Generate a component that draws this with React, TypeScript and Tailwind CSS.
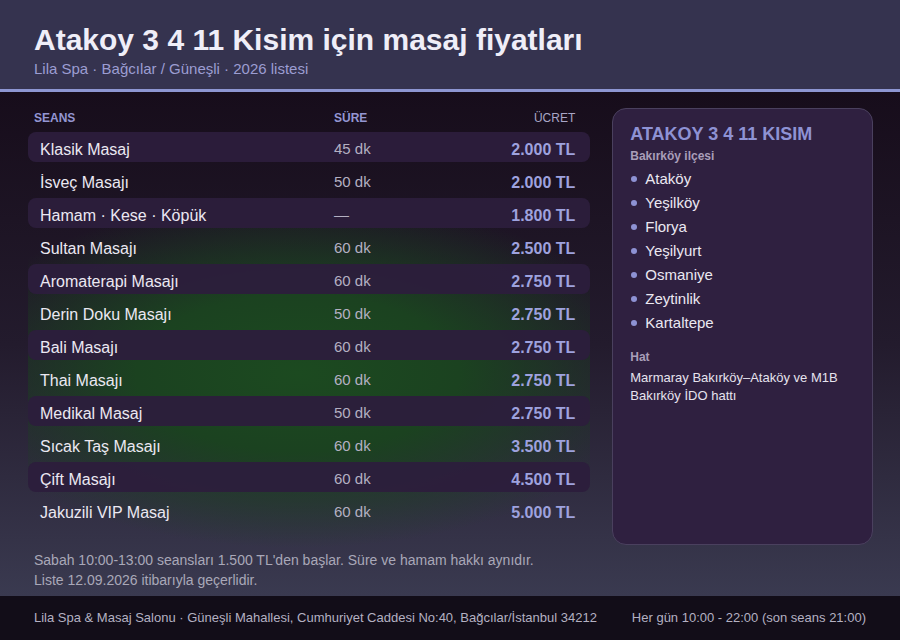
import React from 'react';

const sessions = [
  { name: 'Klasik Masaj', time: '45 dk', price: '2.000 TL' },
  { name: 'İsveç Masajı', time: '50 dk', price: '2.000 TL' },
  { name: 'Hamam · Kese · Köpük', time: '—', price: '1.800 TL' },
  { name: 'Sultan Masajı', time: '60 dk', price: '2.500 TL' },
  { name: 'Aromaterapi Masajı', time: '60 dk', price: '2.750 TL' },
  { name: 'Derin Doku Masajı', time: '50 dk', price: '2.750 TL' },
  { name: 'Bali Masajı', time: '60 dk', price: '2.750 TL' },
  { name: 'Thai Masajı', time: '60 dk', price: '2.750 TL' },
  { name: 'Medikal Masaj', time: '50 dk', price: '2.750 TL' },
  { name: 'Sıcak Taş Masajı', time: '60 dk', price: '3.500 TL' },
  { name: 'Çift Masajı', time: '60 dk', price: '4.500 TL' },
  { name: 'Jakuzili VIP Masaj', time: '60 dk', price: '5.000 TL' },
];

const areas = ['Ataköy', 'Yeşilköy', 'Florya', 'Yeşilyurt', 'Osmaniye', 'Zeytinlik', 'Kartaltepe'];

export default function App() {
  return (
    <div className="w-[900px] h-[640px] flex flex-col overflow-hidden font-['Liberation_Sans',Arial,sans-serif] bg-[#170d1b]">
      {/* header */}
      <header className="h-[92px] shrink-0 bg-[#35334f] border-b-[3px] border-[#8d96d2] px-[34px] pt-[22px]">
        <h1 className="text-[30px] leading-[36px] font-bold text-[#efeef8]">Atakoy 3 4 11 Kisim için masaj fiyatları</h1>
        <p className="text-[15px] leading-[20px] text-[#9c9dd2] mt-[1px]">Lila Spa · Bağcılar / Güneşli · 2026 listesi</p>
      </header>

      <main className="flex-1 flex gap-[22px] pl-[28px] pr-[27px] pt-4 bg-linear-to-b from-[#170d1b] via-[#231b2d] to-[#3a3a50]">
        <section className="w-[563px] flex flex-col bg-[radial-gradient(ellipse_360px_175px_at_270px_265px,#1c4a20_0%,#1b4220_45%,transparent_100%)]">
          <div className="flex items-center h-[20px] pl-[6px] pr-[15px] mb-1 text-[12px] font-bold text-[#9496d2]">
            <span className="w-[300px]">SEANS</span>
            <span className="flex-1">SÜRE</span>
            <span className="text-[#a9a6c6] font-normal">ÜCRET</span>
          </div>
          <div className="flex flex-col gap-[3px]">
            {sessions.map((s, i) => (
              <div
                key={s.name}
                className={
                  i % 2 === 0
                    ? 'flex items-center h-[30px] pl-3 pr-[15px] pt-[5px] rounded-lg bg-[#2c1e3c]/95'
                    : 'flex items-center h-[30px] pl-3 pr-[15px] pt-[5px] rounded-lg'
                }
              >
                <span className="w-[294px] text-[16px] text-[#ebe8f2]">{s.name}</span>
                <span className="flex-1 text-[15px] text-[#b4b0c2]">{s.time}</span>
                <span className="text-[16px] font-bold text-[#9ea2de]">{s.price}</span>
              </div>
            ))}
          </div>
          <p className="mt-[25px] pl-[6px] text-[14px] leading-[20px] text-[#a9a8b8]">
            Sabah 10:00-13:00 seansları 1.500 TL'den başlar. Süre ve hamam hakkı aynıdır.
            <br />
            Liste 12.09.2026 itibarıyla geçerlidir.
          </p>
        </section>

        <aside className="w-[261px] h-[437px] rounded-[14px] border border-[#4a405e] bg-[#2f2040] pl-[17px] pr-4 pt-[14px]">
          <h2 className="text-[18px] leading-[22px] font-bold text-[#8e92d4]">ATAKOY 3 4 11 KISIM</h2>
          <p className="mt-[3px] text-[12px] leading-[16px] font-bold text-[#a99eb9]">Bakırköy ilçesi</p>
          <ul className="mt-[3px]">
            {areas.map((a) => (
              <li key={a} className="flex items-center h-[24px] gap-2 text-[15px] text-[#ebe8f2]">
                <span className="w-[6px] h-[6px] ml-[1px] rounded-full bg-[#8e92d4]" />
                {a}
              </li>
            ))}
          </ul>
          <p className="mt-[14px] text-[12px] leading-[16px] font-bold text-[#a99eb9]">Hat</p>
          <p className="mt-1 text-[13px] leading-[18px] text-[#e6e3ee]">
            Marmaray Bakırköy–Ataköy ve M1B Bakırköy İDO hattı
          </p>
        </aside>
      </main>

      {/* footer */}
      <footer className="h-[44px] shrink-0 bg-[#120d18] flex items-center justify-between px-[34px] text-[13px] text-[#b4b1c2]">
        <span>Lila Spa &amp; Masaj Salonu · Güneşli Mahallesi, Cumhuriyet Caddesi No:40, Bağcılar/İstanbul 34212</span>
        <span>Her gün 10:00 - 22:00 (son seans 21:00)</span>
      </footer>
    </div>
  );
}
